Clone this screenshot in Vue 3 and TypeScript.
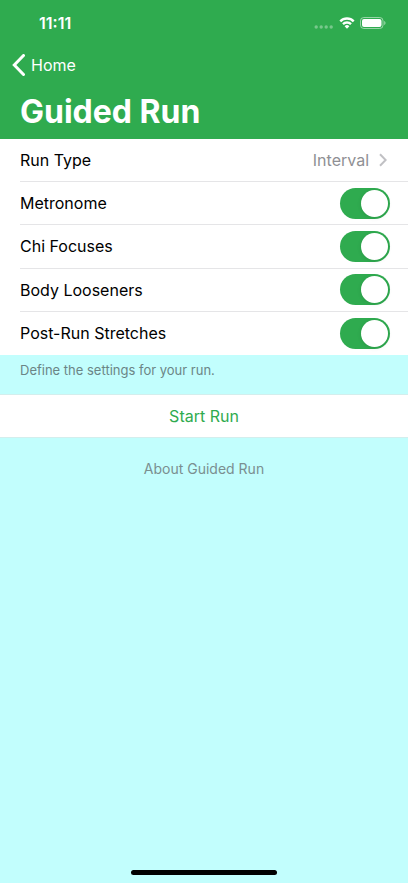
<script setup lang="ts">
import { reactive } from 'vue'

interface Setting {
  id: string
  label: string
  on: boolean
}

const settings = reactive<Setting[]>([
  { id: 'metronome', label: 'Metronome', on: true },
  { id: 'chi-focuses', label: 'Chi Focuses', on: true },
  { id: 'body-looseners', label: 'Body Looseners', on: true },
  { id: 'post-run-stretches', label: 'Post-Run Stretches', on: true },
])
</script>

<template>
  <div class="screen">
    <header class="header">
      <div class="status">
        <span class="time">11:11</span>
        <div class="indicators">
          <svg class="dots" width="20" height="4" viewBox="0 0 20 4" aria-hidden="true">
            <circle cx="2.2" cy="2" r="1.7" />
            <circle cx="7.2" cy="2" r="1.7" />
            <circle cx="12.2" cy="2" r="1.7" />
            <circle cx="17.2" cy="2" r="1.7" />
          </svg>
          <svg class="wifi" width="16" height="12" viewBox="0 0 16 12" aria-hidden="true">
            <path class="arc" d="M1.300 4.300a9.500 9.500 0 0 1 13.400 0" />
            <path class="arc" d="M4 7.200a5.600 5.600 0 0 1 8 0" />
            <path d="M5.600 9.200a3.400 3.400 0 0 1 4.800 0L8 11.700z" />
          </svg>
          <svg class="battery" width="26" height="12" viewBox="0 0 26 12" aria-hidden="true">
            <rect class="shell" x="0.5" y="0.5" width="22.500" height="11" rx="3.300" />
            <rect x="2" y="2" width="19.500" height="8" rx="2" />
            <path class="tip" d="M24.200 4v4c.8-.3 1.300-1.100 1.300-2s-.5-1.700-1.300-2z" />
          </svg>
        </div>
      </div>
      <a class="back" href="#home">
        <svg width="13" height="22" viewBox="0 0 13 22" aria-hidden="true">
          <path d="M11.500 1.500 2.300 11l9.200 9.500" />
        </svg>
        <span>Home</span>
      </a>
      <h1 class="title">Guided Run</h1>
    </header>

    <main class="content">
      <div class="list">
        <button class="row" type="button">
          <span>Run Type</span>
          <span class="value">
            Interval
            <svg width="8" height="14" viewBox="0 0 8 14" aria-hidden="true">
              <path d="M1 1.200 6.700 7 1 12.800" />
            </svg>
          </span>
        </button>
        <label v-for="s in settings" :key="s.id" class="row" :for="s.id">
          <span>{{ s.label }}</span>
          <input :id="s.id" v-model="s.on" class="switch" type="checkbox" role="switch" />
        </label>
      </div>
      <p class="note">Define the settings for your run.</p>
      <button class="start" type="button">Start Run</button>
      <a class="about" href="#about">About Guided Run</a>
    </main>

    <div class="home-bar"></div>
  </div>
</template>

<style>
body {
  background: #c2fefd;
}
</style>

<style scoped>
.screen {
  display: flex;
  flex-direction: column;
  min-height: 100vh;
  background: #c2fefd;
  color: #000;
  font-family: Inter, "Liberation Sans", sans-serif;
  font-size: 16px;
  line-height: 20px;
}

.header {
  background: #2fab4f;
  color: #fff;
}

.status {
  display: flex;
  align-items: center;
  justify-content: space-between;
  height: 46px;
  padding: 0 22px 0 39px;
}

.time {
  font-weight: 600;
}

.indicators {
  display: flex;
  align-items: center;
  gap: 5px;
}

.indicators svg {
  fill: #fff;
}

.indicators .dots {
  margin-top: 8px;
  opacity: 0.35;
}

.indicators .arc {
  fill: none;
  stroke: #fff;
  stroke-width: 2.4;
}

.indicators .shell {
  fill: none;
  stroke: #fff;
  stroke-opacity: 0.5;
}

.indicators .tip {
  fill-opacity: 0.5;
}

.back {
  display: flex;
  align-items: center;
  gap: 6px;
  width: max-content;
  height: 38px;
  padding-left: 12px;
  color: #fff;
  text-decoration: none;
}

.back svg {
  fill: none;
  stroke: #fff;
  stroke-width: 3;
  stroke-linecap: round;
}

.title {
  margin: 0;
  padding: 8px 20px 7px;
  font-size: 32px;
  font-weight: 700;
  line-height: 40px;
}

.content {
  display: flex;
  flex: 1;
  flex-direction: column;
}

.list {
  display: grid;
  grid-auto-rows: 1fr;
  height: 216px;
  padding-left: 20px;
  background: #fff;
}

.row {
  display: flex;
  align-items: center;
  justify-content: space-between;
  margin: 0;
  padding: 0 18px 0 0;
  border: 0;
  border-bottom: 1px solid #e5e5e7;
  background: none;
  color: inherit;
  font: inherit;
  text-align: left;
}

.row:last-child {
  border-bottom: 0;
}

.value {
  display: flex;
  align-items: center;
  gap: 10px;
  padding-right: 3px;
  color: #8f8f94;
}

.value svg {
  fill: none;
  stroke: #c0c0c4;
  stroke-width: 2;
}

.switch {
  flex: none;
  width: 50px;
  height: 31px;
  margin: 0;
  padding: 2px;
  border-radius: 16px;
  appearance: none;
  background: #e5e5ea;
}

.switch::before {
  display: block;
  width: 27px;
  height: 27px;
  border-radius: 50%;
  background: #fff;
  box-shadow: 0 1px 4px rgb(0 0 0 / 10%);
  content: "";
}

.switch:checked {
  background: #2fab4f;
}

.switch:checked::before {
  margin-left: auto;
}

.note {
  margin: 0;
  padding: 7px 20px 16px;
  color: #6b8586;
  font-size: 13px;
  line-height: 16px;
}

.start {
  height: 44px;
  padding: 0;
  border: 0;
  border-top: 1px solid #d3eeed;
  border-bottom: 1px solid #d3eeed;
  background: #fff;
  color: #2fab4f;
  font: inherit;
}

.about {
  align-self: center;
  margin-top: 21px;
  color: #7a8f90;
  font-size: 14px;
  text-decoration: none;
}

.home-bar {
  align-self: center;
  width: 146px;
  height: 5px;
  margin-bottom: 8px;
  border-radius: 3px;
  background: #000;
}
</style>
